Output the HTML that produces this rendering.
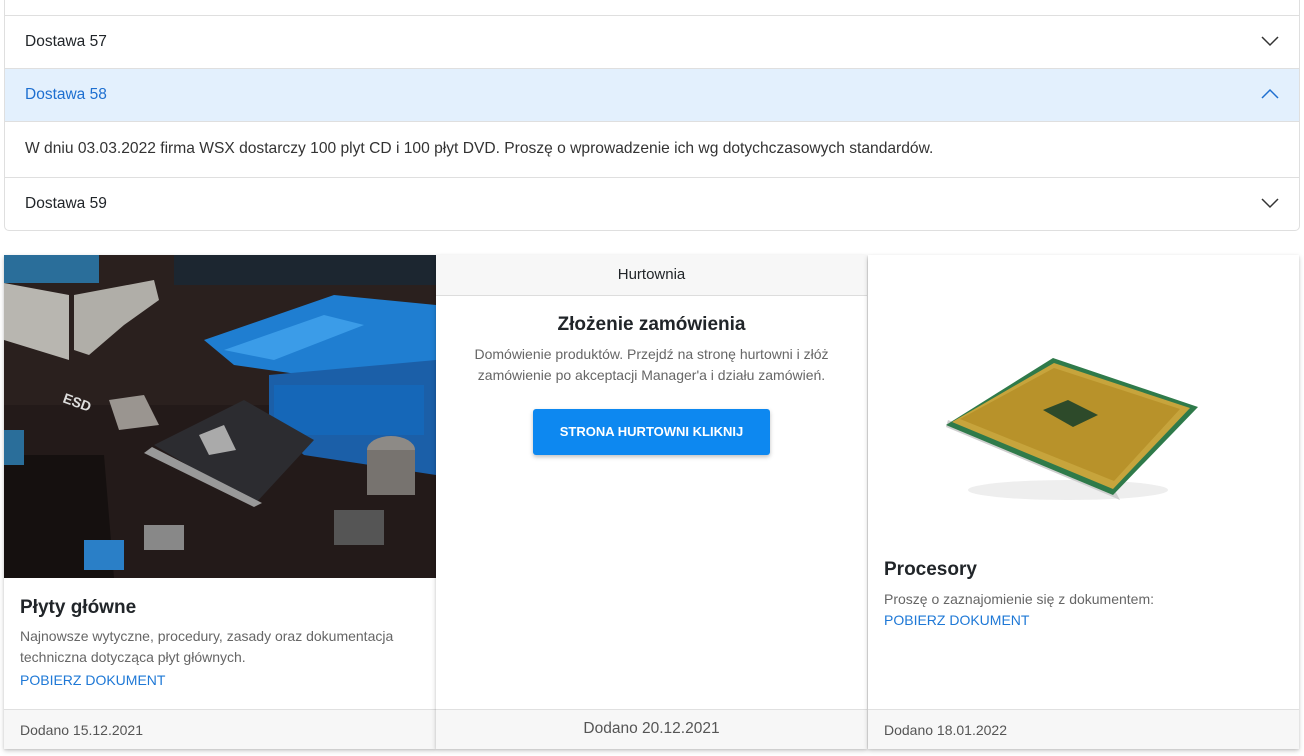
<!DOCTYPE html>
<html><head><meta charset="utf-8"><style>
*{box-sizing:border-box;margin:0;padding:0}
body{width:1304px;height:756px;background:#fff;font-family:"Liberation Sans",sans-serif;position:relative;overflow:hidden;color:#212529}
.acc{position:absolute;left:4px;top:-11px;width:1296px;height:242px;border:1px solid #dfdfdf;border-radius:0 0 5px 5px}
.row{position:absolute;left:0;width:1294px;border-top:1px solid #dfdfdf;font-size:15.5px}
.row span{position:absolute;left:20px}
.chev{position:absolute;left:1256px}
.card{position:absolute;top:255px;height:494px;background:#fff;box-shadow:0 2px 5px rgba(0,0,0,.18),0 1px 2px rgba(0,0,0,.1)}
.foot{position:absolute;left:0;right:0;bottom:0;height:40px;background:#f7f7f7;border-top:1px solid #e0e0e0;font-size:14px;color:#555}
.t{position:absolute;font-size:19px;font-weight:bold;color:#212529}
.p{position:absolute;font-size:14px;color:#666;line-height:21px}
.l{position:absolute;font-size:14px;color:#1e78d6}
</style></head><body>
<div class="acc">
 <div class="row" style="top:25px;height:53px"><span style="top:17px">Dostawa 57</span>
  <svg class="chev" style="top:19px" width="18" height="12"><path d="M1 2 L9 10 L17 2" fill="none" stroke="#333" stroke-width="1.5"/></svg></div>
 <div class="row" style="top:78px;height:53px;background:#e3f0fd;color:#1e6fd0"><span style="top:17px">Dostawa 58</span>
  <svg class="chev" style="top:19px" width="18" height="12"><path d="M1 10 L9 2 L17 10" fill="none" stroke="#1e6fd0" stroke-width="1.5"/></svg></div>
 <div class="row" style="top:131px;height:56px;font-size:15.6px;color:#333"><span style="top:18px">W dniu 03.03.2022 firma WSX dostarczy 100 plyt CD i 100 płyt DVD. Proszę o wprowadzenie ich wg dotychczasowych standardów.</span></div>
 <div class="row" style="top:187px;height:53px"><span style="top:17px">Dostawa 59</span>
  <svg class="chev" style="top:19px" width="18" height="12"><path d="M1 2 L9 10 L17 2" fill="none" stroke="#333" stroke-width="1.5"/></svg></div>
</div>

<div class="card" style="left:4px;width:432px">
 <svg width="432" height="323" style="position:absolute;left:0;top:0">
  <rect width="432" height="323" fill="#2a201e"/>
  <rect x="0" y="150" width="432" height="173" fill="#231a19"/>
  <rect x="170" y="0" width="262" height="30" fill="#1c2630"/>
  <rect x="0" y="0" width="95" height="28" fill="#2a6e9a"/>
  <polygon points="0,28 65,40 65,105 0,85" fill="#b8b6b0"/>
  <polygon points="70,40 150,25 155,45 120,70 85,100 70,95" fill="#b0aea8"/>
  <polygon points="200,85 330,40 432,50 432,130 300,120 230,110" fill="#1f7ed1"/>
  <polygon points="220,95 320,60 360,70 270,105" fill="#3b9ce8"/>
  <polygon points="265,120 432,105 432,220 300,200 265,170" fill="#1b5fa8"/>
  <rect x="270" y="130" width="150" height="50" fill="#1567b8"/>
  <polygon points="150,190 240,145 310,185 250,250" fill="#2c2c30"/>
  <polygon points="140,198 250,252 258,248 148,192" fill="#999"/>
  <polygon points="195,180 220,170 232,195 205,200" fill="#aaa"/>
  <polygon points="105,145 140,140 155,170 115,175" fill="#9a9590"/>
  <ellipse cx="387" cy="195" rx="24" ry="14" fill="#8d8a86"/>
  <rect x="363" y="195" width="48" height="45" fill="#77736f"/>
  <polygon points="0,200 100,200 110,323 0,323" fill="#15100f"/>
  <rect x="80" y="285" width="40" height="30" fill="#2a7fc7"/>
  <rect x="0" y="175" width="20" height="35" fill="#2a6e9a"/>
  <text x="58" y="147" fill="#ddd" font-size="14" font-weight="bold" transform="rotate(20 58 147)">ESD</text>
  <rect x="330" y="255" width="50" height="35" fill="#555"/>
  <rect x="140" y="270" width="40" height="25" fill="#888"/>
 </svg>
 <div class="t" style="left:16px;top:342px">Płyty główne</div>
 <div class="p" style="left:16px;top:371px">Najnowsze wytyczne, procedury, zasady oraz dokumentacja<br>techniczna dotycząca płyt głównych.</div>
 <div class="l" style="left:16px;top:417px">POBIERZ DOKUMENT</div>
 <div class="foot"><span style="position:absolute;left:16px;top:12px">Dodano 15.12.2021</span></div>
</div>

<div class="card" style="left:436px;width:431px">
 <div style="position:absolute;left:0;right:0;top:0;height:41px;background:#f7f7f7;border-bottom:1px solid #ddd;text-align:center;font-size:15px;line-height:40px">Hurtownia</div>
 <div style="position:absolute;left:0;right:0;top:59px;text-align:center;font-size:19px;font-weight:bold">Złożenie zamówienia</div>
 <div class="p" style="left:0;right:0;top:89px;text-align:center">Domówienie produktów. Przejdź na stronę hurtowni i złóż<br>zamówienie po akceptacji Manager'a i działu zamówień.</div>
 <div style="position:absolute;left:97px;top:154px;width:237px;height:46px;background:#0d88f0;border-radius:3px;box-shadow:0 2px 4px rgba(0,0,0,.25);color:#fff;font-size:13px;font-weight:bold;text-align:center;line-height:46px">STRONA HURTOWNI KLIKNIJ</div>
 <div class="foot" style="text-align:center;font-size:15.5px;line-height:38px">Dodano 20.12.2021</div>
</div>

<div class="card" style="left:868px;width:431px">
 <svg width="431" height="300" style="position:absolute;left:0;top:0">
  <ellipse cx="200" cy="235" rx="100" ry="10" fill="#eee"/>
  <polygon points="78,172 245,242 252,245 245,232 80,165" fill="#cfcfcf"/>
  <polygon points="78,170 185,103 330,152 245,240" fill="#2f7a4a"/>
  <polygon points="84,167 186,108 322,153 245,234" fill="#c7a43c"/>
  <polygon points="92,164 186,113 312,154 246,226" fill="#b8922a"/>
  <polygon points="175,155 200,145 230,160 205,172" fill="#2d4a2a"/>
 </svg>
 <div class="t" style="left:16px;top:304px">Procesory</div>
 <div class="p" style="left:16px;top:334px">Proszę o zaznajomienie się z dokumentem:</div>
 <div class="l" style="left:16px;top:357px">POBIERZ DOKUMENT</div>
 <div class="foot"><span style="position:absolute;left:16px;top:12px">Dodano 18.01.2022</span></div>
</div>
</body></html>
